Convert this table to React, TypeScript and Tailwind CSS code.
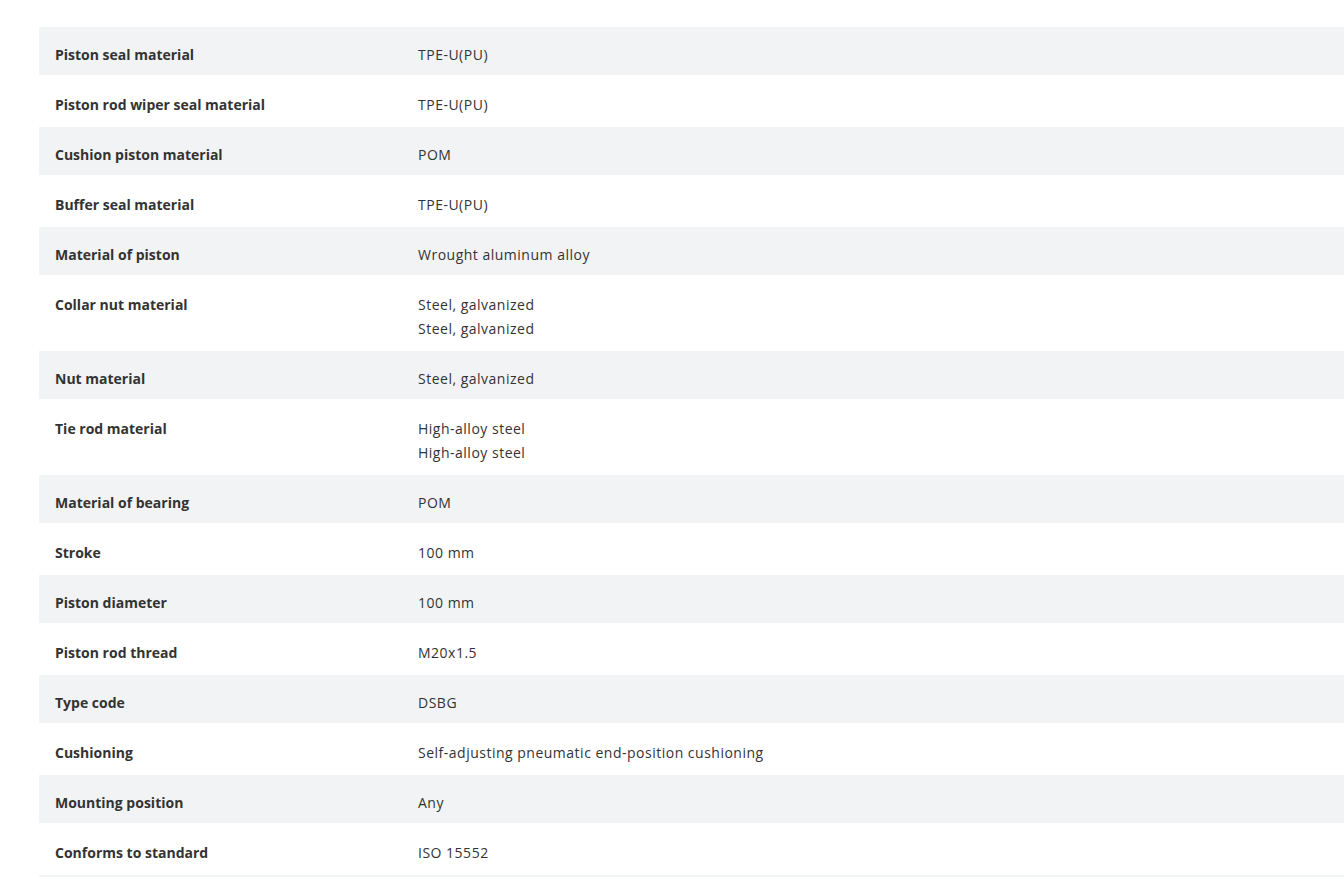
import React from "react";

const rows: [string, string[]][] = [
  ["Piston seal material", ["TPE-U(PU)"]],
  ["Piston rod wiper seal material", ["TPE-U(PU)"]],
  ["Cushion piston material", ["POM"]],
  ["Buffer seal material", ["TPE-U(PU)"]],
  ["Material of piston", ["Wrought aluminum alloy"]],
  ["Collar nut material", ["Steel, galvanized", "Steel, galvanized"]],
  ["Nut material", ["Steel, galvanized"]],
  ["Tie rod material", ["High-alloy steel", "High-alloy steel"]],
  ["Material of bearing", ["POM"]],
  ["Stroke", ["100 mm"]],
  ["Piston diameter", ["100 mm"]],
  ["Piston rod thread", ["M20x1.5"]],
  ["Type code", ["DSBG"]],
  ["Cushioning", ["Self-adjusting pneumatic end-position cushioning"]],
  ["Mounting position", ["Any"]],
  ["Conforms to standard", ["ISO 15552"]],
];

export default function App() {
  return (
    <div
      className="min-h-screen bg-white text-[#333] text-[14px] leading-[24px] overflow-hidden"
      style={{ fontFamily: "'Open Sans', Roboto, sans-serif" }}
    >
      <div className="pt-[27px] pl-[39px] w-[1400px]">
        {rows.map(([label, values], i) => {
          const grey = i % 2 === 0;
          return (
            <div
              key={i}
              className={
                grey
                  ? "grid grid-cols-[363px_1fr] bg-[#f2f3f5] pt-[16px] pb-[8px]"
                  : "grid grid-cols-[363px_1fr] bg-white pt-[18px] pb-[10px]"
              }
            >
              <div className="px-4 font-bold">{label}</div>
              <div className="px-4 tracking-[0.5px]">
                {values.map((v, j) => (
                  <div key={j}>{v}</div>
                ))}
              </div>
            </div>
          );
        })}
        <div className="h-[2px] bg-[#f2f3f5]" />
      </div>
    </div>
  );
}
